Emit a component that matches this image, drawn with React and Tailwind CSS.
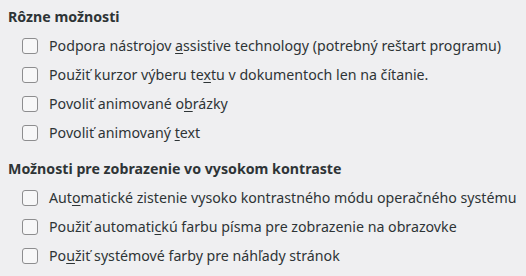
import React from 'react';

const sections = [
    {
        title: "Rôzne možnosti",
        items: [
            ["Podpora nástrojov ", "a", "ssistive technology (potrebný reštart programu)"],
            ["Použiť kurzor výberu te", "x", "tu v dokumentoch len na čítanie."],
            ["Povoliť animované o", "b", "rázky"],
            ["Povoliť animovaný ", "t", "ext"],
        ],
    },
    {
        title: "Možnosti pre zobrazenie vo vysokom kontraste",
        items: [
            ["Aut", "o", "matické zistenie vysoko kontrastného módu operačného systému"],
            ["Použiť automati", "c", "kú farbu písma pre zobrazenie na obrazovke"],
            ["Po", "u", "žiť systémové farby pre náhľady stránok"],
        ],
    },
];

const Option = ({ parts }) => (
    <label className="flex items-center h-[29px] pl-[22px]">
        <span className="w-4 h-4 rounded-[3px] border border-[#8d8d8f] bg-[#f7f7f8] shrink-0" />
        <span className="ml-[11px]">
            {parts[0]}
            <span className="underline underline-offset-2">{parts[1]}</span>
            {parts[2]}
        </span>
    </label>
);

export default function App() {
    return (
        <div className="w-[526px] h-[276px] bg-[#efeff1] text-[#2e3436] text-[14.2px] pt-[5px] pl-2 font-['Noto_Sans',sans-serif]">
            {sections.map((s, i) => (
                <div key={i} className={i ? "mt-[10px]" : ""}>
                    <h3 className="font-bold h-[26px] leading-[24px]">{s.title}</h3>
                    <div className="-ml-2">
                        {s.items.map((it, j) => (
                            <Option key={j} parts={it} />
                        ))}
                    </div>
                </div>
            ))}
        </div>
    );
}
